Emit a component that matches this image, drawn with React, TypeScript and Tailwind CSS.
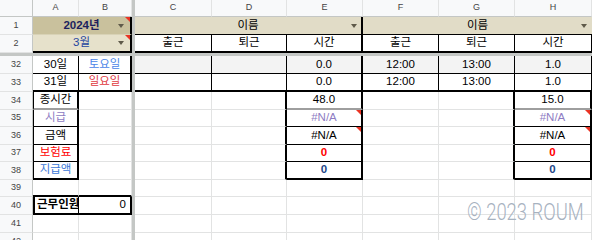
import type { ReactNode } from 'react'
import { twMerge } from 'tailwind-merge'

const Cell = ({ w, className, children }: { w: string; className?: string; children?: ReactNode }) => (
    <div
        className={twMerge(
            'relative flex h-full shrink-0 items-center justify-center overflow-hidden whitespace-nowrap border-r border-b border-[#e2e3e3] text-[11.5px] text-black',
            w,
            className
        )}
    >
        {children}
    </div>
)

const Rn = ({ n }: { n?: string }) => (
    <div className="flex h-full w-[33px] shrink-0 items-center justify-center border-r border-b border-[#c4c7c5] border-b-[#e2e3e3] bg-[#f8f9fa] text-[9px] text-[#444]">
        {n}
    </div>
)

const Bar = () => <div className="h-full w-[3px] shrink-0 bg-[#c4c7c5]" />

const Arrow = ({ className }: { className?: string }) => (
    <span className={twMerge('absolute right-[6px] top-1/2 -translate-y-1/2 border-x-[3.5px] border-t-[4px] border-x-transparent border-t-[#5f5a4a]', className)} />
)

const Flag = () => <span className="absolute right-0 top-0 border-l-[5px] border-t-[5px] border-l-transparent border-t-[#ea3323]" />

// columns: rn 33 | A 46 | B 53 | bar 3 | C 77 | D 75 | E 76 | F 76 | G 76 | H 77
const A = 'w-[46px]'
const B = 'w-[53px]'
const C = 'w-[77px]'
const D = 'w-[75px]'
const E = 'w-[76px]'
const F = 'w-[76px]'
const G = 'w-[76px]'
const H = 'w-[77px]'

const sums = [
    { label: '종시간', labelColor: 'text-black', e: '48.0', h: '15.0', valueClass: 'text-black', line: 'border-b-2 border-b-[#9e9e9e]' },
    { label: '시급', labelColor: 'text-[#8e7cc3]', e: '#N/A', h: '#N/A', valueClass: 'text-[#8e7cc3]', line: 'border-b border-b-black', flag: true },
    { label: '금액', labelColor: 'text-black', e: '#N/A', h: '#N/A', valueClass: 'text-black', line: 'border-b border-b-black', flag: true },
    { label: '보험료', labelColor: 'text-[#ff0000]', e: '0', h: '0', valueClass: 'text-[#ff0000] font-bold', line: 'border-b border-b-black' },
    { label: '지급액', labelColor: 'text-[#3c78d8]', e: '0', h: '0', valueClass: 'text-[#1c4587] font-bold', line: 'border-b-2 border-b-black' },
]
const sumHeights = ['h-[18px]', 'h-[17px]', 'h-[18px]', 'h-[17px]', 'h-[18px]']

const days = [
    { n: '32', d: '30일', w: '토요일', wc: 'text-[#4a86e8]', bg: 'bg-[#f3f3f3]', last: 'border-b border-b-black' },
    { n: '33', d: '31일', w: '일요일', wc: 'text-[#e0393e]', bg: 'bg-white', last: 'border-b-2 border-b-black' },
]

export default function App() {
    return (
        <div className="relative h-[240px] w-[592px] overflow-hidden bg-white font-['Liberation_Sans','Noto_Sans_CJK_KR',sans-serif]">
            {/* column letters */}
            <div className="flex h-[17px]">
                <div className="h-full w-[33px] shrink-0 border-r border-b border-[#c4c7c5] bg-[#f8f9fa]" />
                {[
                    ['A', A],
                    ['B', B],
                ].map(([l, w]) => (
                    <Cell key={l} w={w} className="border-b-[#c4c7c5] bg-[#f8f9fa] text-[9px] text-[#444]">{l}</Cell>
                ))}
                <Bar />
                {[
                    ['C', C],
                    ['D', D],
                    ['E', E],
                    ['F', F],
                    ['G', G],
                    ['H', H],
                ].map(([l, w]) => (
                    <Cell key={l} w={w} className="border-b-[#c4c7c5] bg-[#f8f9fa] text-[9px] text-[#444]">{l}</Cell>
                ))}
            </div>

            {/* row 1 */}
            <div className="flex h-[18px]">
                <Rn n="1" />
                <Cell w="w-[99px]" className="border-r-2 border-r-black border-b-[#d8d2b6] bg-[#c9c19d] font-bold text-[#1c1f5e]">
                    2024년
                    <Arrow />
                    <Flag />
                </Cell>
                <Bar />
                <Cell w="w-[228px]" className="border-r-2 border-r-black border-b-black bg-[#e1dcc7]">
                    이름
                    <Arrow className="right-[4px]" />
                </Cell>
                <Cell w="w-[229px]" className="border-r-0 border-b-black bg-[#e1dcc7]">
                    이름
                    <Arrow className="right-[5px]" />
                </Cell>
            </div>

            {/* row 2 */}
            <div className="flex h-[18px]">
                <Rn n="2" />
                <Cell w="w-[99px]" className="border-r-2 border-r-black border-b-2 border-b-black bg-[#e6e1cb] text-[#1f45a0]">
                    3월
                    <Arrow />
                    <Flag />
                </Cell>
                <Bar />
                <Cell w={C} className="border-r-black border-b-2 border-b-black">출근</Cell>
                <Cell w={D} className="border-r-black border-b-2 border-b-black">퇴근</Cell>
                <Cell w={E} className="border-r-2 border-r-black border-b-2 border-b-black">시간</Cell>
                <Cell w={F} className="border-r-black border-b-2 border-b-black">출근</Cell>
                <Cell w={G} className="border-r-black border-b-2 border-b-black">퇴근</Cell>
                <Cell w={H} className="border-r-black border-b-2 border-b-black">시간</Cell>
            </div>

            {/* frozen rows divider */}
            <div className="h-[3px] bg-[#c4c7c5]" />

            {days.map((r) => (
                <div key={r.n} className="flex h-[18px]">
                    <Rn n={r.n} />
                    <Cell w={A} className={twMerge('border-r-black', r.last)}>{r.d}</Cell>
                    <Cell w={B} className={twMerge('border-r-2 border-r-black', r.wc, r.last)}>{r.w}</Cell>
                    <Bar />
                    <Cell w={C} className={twMerge('border-r-black border-b-black', r.bg, r.last)} />
                    <Cell w={D} className={twMerge('border-r-black border-b-black', r.bg, r.last)} />
                    <Cell w={E} className={twMerge('border-r-2 border-r-black border-b-black', r.bg, r.last)}>0.0</Cell>
                    <Cell w={F} className={twMerge('border-r-black border-b-black', r.bg, r.last)}>12:00</Cell>
                    <Cell w={G} className={twMerge('border-r-black border-b-black', r.bg, r.last)}>13:00</Cell>
                    <Cell w={H} className={twMerge('border-r-black border-b-black', r.bg, r.last)}>1.0</Cell>
                </div>
            ))}

            {sums.map((s, i) => (
                <div key={s.label} className={twMerge('flex', sumHeights[i])}>
                    <Rn n={String(34 + i)} />
                    <Cell w={A} className={twMerge('border-l border-l-black border-r-2 border-r-black', s.labelColor, s.line)}>{s.label}</Cell>
                    <Cell w={B} />
                    <Bar />
                    <Cell w={C} />
                    <Cell w={D} className="border-r-2 border-r-black" />
                    <Cell w={E} className={twMerge('border-r-2 border-r-black', s.valueClass, s.line)}>
                        {s.e}
                        {s.flag && <Flag />}
                    </Cell>
                    <Cell w={F} />
                    <Cell w={G} className="border-r-2 border-r-black" />
                    <Cell w={H} className={twMerge('border-r-2 border-r-black', s.valueClass, s.line)}>
                        {s.h}
                        {s.flag && <Flag />}
                    </Cell>
                </div>
            ))}

            {/* row 39 */}
            <div className="flex h-[17px]">
                <Rn n="39" />
                <Cell w={A} className="border-b-2 border-b-black" />
                <Cell w={B} className="border-b-2 border-b-black" />
                <Bar />
                <Cell w={C} />
                <Cell w={D} />
                <Cell w={E} />
                <Cell w={F} />
                <Cell w={G} />
                <Cell w={H} />
            </div>

            {/* row 40 */}
            <div className="flex h-[18px]">
                <Rn n="40" />
                <Cell w={A} className="justify-start border-l-2 border-l-black border-r-black border-b-2 border-b-black pl-[2px] font-bold">
                    근무인원
                </Cell>
                <Cell w={B} className="justify-end border-r-2 border-r-black border-b-2 border-b-black pr-[4px]">
                    0
                </Cell>
                <Bar />
                <Cell w={C} />
                <Cell w={D} />
                <Cell w={E} />
                <Cell w={F} />
                <Cell w={G} />
                <Cell w={H} />
            </div>

            {['41', '42'].map((n) => (
                <div key={n} className="flex h-[18px]">
                    <Rn n={n} />
                    <Cell w={A} />
                    <Cell w={B} />
                    <Bar />
                    <Cell w={C} />
                    <Cell w={D} />
                    <Cell w={E} />
                    <Cell w={F} />
                    <Cell w={G} />
                    <Cell w={H} />
                </div>
            ))}

            {/* watermark */}
            <div className="pointer-events-none absolute left-[467px] top-[201px] origin-left scale-x-[0.8] whitespace-nowrap font-['Roboto',sans-serif] text-[23px] font-light leading-none text-[#a7b2bf]">
                © 2023 ROUM
            </div>
        </div>
    )
}
